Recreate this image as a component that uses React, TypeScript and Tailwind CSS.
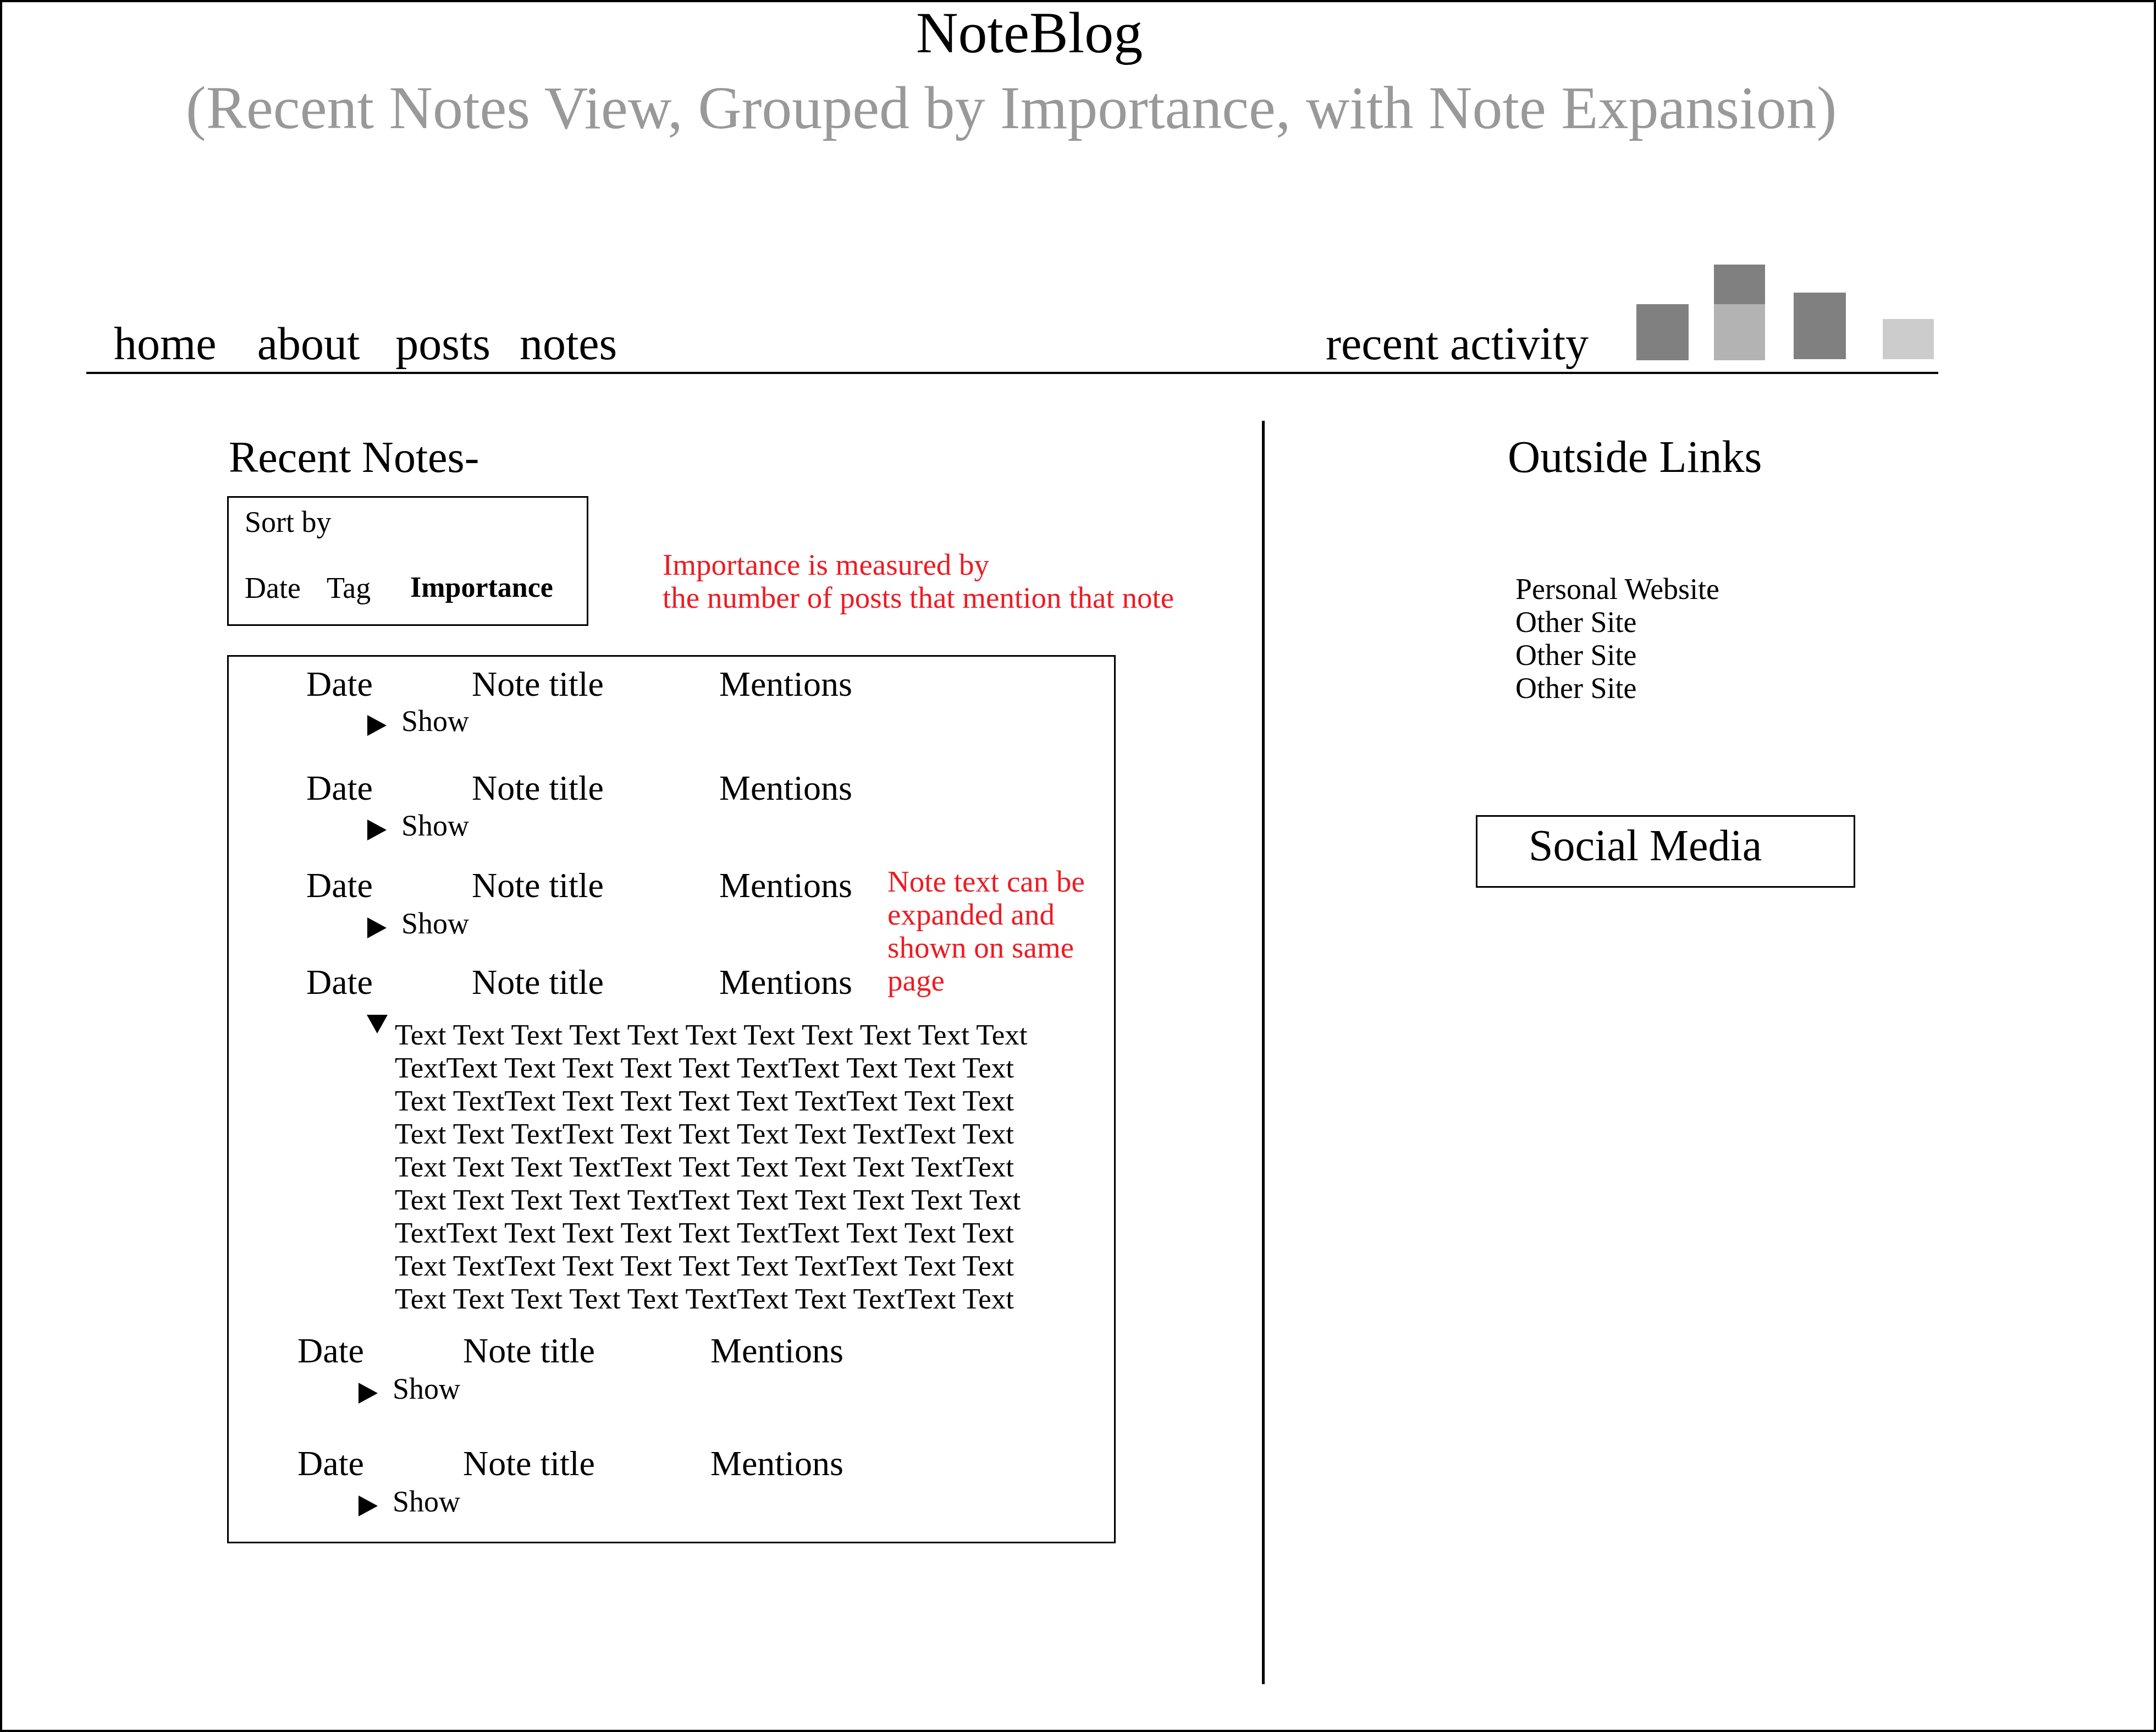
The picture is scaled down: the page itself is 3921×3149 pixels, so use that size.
const textLines = [
    "Text Text Text Text Text Text Text Text Text Text Text",
    "TextText Text Text Text Text TextText Text Text Text",
    "Text TextText Text Text Text Text TextText Text Text",
    "Text Text TextText Text Text Text Text TextText Text",
    "Text Text Text TextText Text Text Text Text TextText",
    "Text Text Text Text TextText Text Text Text Text Text",
    "TextText Text Text Text Text TextText Text Text Text",
    "Text TextText Text Text Text Text TextText Text Text",
    "Text Text Text Text Text TextText Text TextText Text",
];

function RowHeader({ className = "" }: { className?: string }) {
    return (
        <div className={`flex text-[64px] leading-none ${className}`}>
            <span className="w-[301px]">Date</span>
            <span className="w-[450px]">Note title</span>
            <span>Mentions</span>
        </div>
    );
}

function ShowLine({ className = "" }: { className?: string }) {
    return (
        <div className={`flex items-start text-[54px] leading-none ${className}`}>
            <span className="ml-[111px] mt-[16px] h-0 w-0 border-y-[19px] border-l-[35px] border-y-transparent border-l-black" />
            <span className="ml-[27px]">Show</span>
        </div>
    );
}

export default function App() {
    return (
        <div className="h-[3149px] w-[3921px] overflow-hidden border-4 border-black bg-white font-['Liberation_Serif',serif] text-black">
            <header className="flex flex-col items-start pt-[3px]">
                <h1 className="ml-[1662px] text-[106px] leading-none">NoteBlog</h1>
                <p className="ml-[334px] mt-[28px] text-[110px] leading-none text-[#999999]">
                    (Recent Notes View, Grouped by Importance, with Note Expansion)
                </p>
            </header>

            <nav className="ml-[153px] mr-[392px] mt-[230px] flex items-end justify-between border-b-4 border-black pb-[9px] pl-[50px] pr-[8px] text-[84px] leading-none">
                <div className="flex items-end">
                    <span>home</span>
                    <span className="ml-[74px]">about</span>
                    <span className="ml-[65px]">posts</span>
                    <span className="ml-[53px]">notes</span>
                </div>
                <div className="flex items-end">
                    <span>recent activity</span>
                    <div className="mb-[12px] ml-[87px] flex items-end">
                        <div className="h-[102px] w-[95px] bg-[#808080]" />
                        <div className="ml-[46px] flex w-[93px] flex-col">
                            <div className="h-[72px] bg-[#808080]" />
                            <div className="h-[102px] bg-[#b3b3b3]" />
                        </div>
                        <div className="mb-[2px] ml-[52px] h-[121px] w-[95px] bg-[#808080]" />
                        <div className="mb-[2px] ml-[67px] h-[73px] w-[93px] bg-[#cccccc]" />
                    </div>
                </div>
            </nav>

            <main className="mt-[85px] flex items-start">
                <section className="w-[2291px] shrink-0 pl-[409px]">
                    <h2 className="ml-[3px] mt-[26px] text-[80px] leading-none">Recent Notes-</h2>

                    <div className="mt-[31px] flex items-start">
                        <div className="h-[236px] w-[657px] border-[3px] border-black pl-[29px] pt-[17px] text-[54px] leading-none">
                            <p>Sort by</p>
                            <div className="mt-[66px] flex">
                                <span className="w-[149px]">Date</span>
                                <span className="w-[152px]">Tag</span>
                                <span className="text-[52px] font-bold">Importance</span>
                            </div>
                        </div>
                        <p className="ml-[135px] mt-[95px] text-[55px] leading-[60px] text-[#ed1c24]">
                            Importance is measured by
                            <br />
                            the number of posts that mention that note
                        </p>
                    </div>

                    <div className="mt-[53px] h-[1615px] w-[1616px] border-[3px] border-black pl-[141px] pt-[18px]">
                        <RowHeader />
                        <ShowLine className="mt-[8px]" />
                        <RowHeader className="mt-[63px]" />
                        <ShowLine className="mt-[9px]" />

                        <div className="mt-[50px] flex items-start">
                            <div className="w-[1057px]">
                                <RowHeader />
                                <ShowLine className="mt-[10px]" />
                                <RowHeader className="mt-[48px]" />
                            </div>
                            <p className="-mt-[5px] text-[55px] leading-[60px] text-[#ed1c24]">
                                Note text can be
                                <br />
                                expanded and
                                <br />
                                shown on same
                                <br />
                                page
                            </p>
                        </div>

                        <div className="mt-[27px] flex items-start">
                            <span className="ml-[110px] h-0 w-0 border-x-[19px] border-t-[34px] border-x-transparent border-t-black" />
                            <div className="ml-[13px] mt-[6px] text-[53px] leading-[60px]">
                                {textLines.map((line, i) => (
                                    <div key={i} className="whitespace-pre">
                                        {line}
                                    </div>
                                ))}
                            </div>
                        </div>

                        <div className="-ml-[16px]">
                            <RowHeader className="mt-[33px]" />
                            <ShowLine className="mt-[10px]" />
                            <RowHeader className="mt-[77px]" />
                            <ShowLine className="mt-[10px]" />
                        </div>
                    </div>
                </section>

                <div className="h-[2297px] w-[5px] shrink-0 bg-black" />

                <aside className="pl-[384px]">
                    <h2 className="ml-[58px] mt-[25px] text-[82px] leading-none">Outside Links</h2>
                    <ul className="ml-[72px] mt-[169px] text-[54px] leading-[60px]">
                        <li>Personal Website</li>
                        <li>Other Site</li>
                        <li>Other Site</li>
                        <li>Other Site</li>
                    </ul>
                    <div className="mt-[201px] h-[132px] w-[690px] border-[3px] border-black pl-[93px] pt-[12px] text-[80px] leading-none">
                        Social Media
                    </div>
                </aside>
            </main>
        </div>
    );
}
